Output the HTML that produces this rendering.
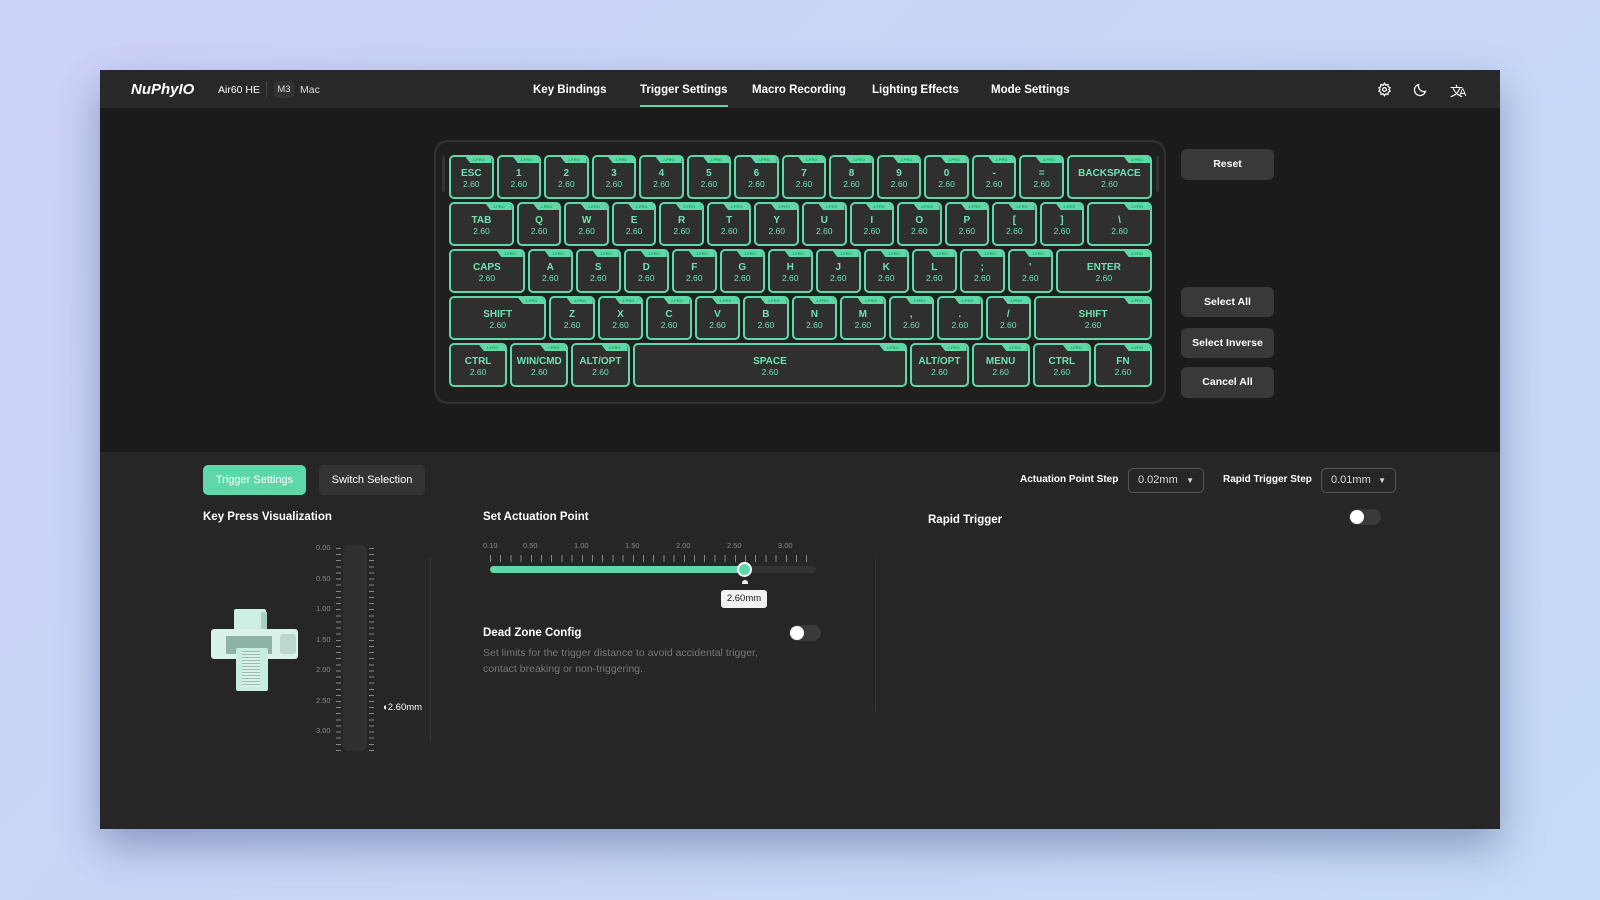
<!DOCTYPE html>
<html><head><meta charset="utf-8"><style>
*{box-sizing:border-box;margin:0;padding:0}
body{width:1600px;height:900px;overflow:hidden;background:linear-gradient(135deg,#cdd2f9 0%,#c9d8f8 60%,#c6dcf7 100%);font-family:"Liberation Sans",sans-serif;position:relative}
.a{position:absolute}
#win{left:100px;top:70px;width:1400px;height:759px;background:#1b1b1b;box-shadow:0 18px 40px rgba(60,80,130,.45)}
#hdr{left:0;top:0;width:1400px;height:38px;background:#282828}
.nav{top:14px;color:#fff;font-size:11.5px;font-weight:bold;white-space:nowrap}
#bot{left:0;top:382px;width:1400px;height:377px;background:#262626}
.kb{left:334px;top:70px;width:732px;height:264px;border:2px solid #333;border-radius:14px;background:#1f1f1f}
.rows{left:349px;top:85px;width:703px}
.row{display:flex;gap:3px;height:44px;margin-bottom:3px}
.k{position:relative;background:#2f2f2f;border:2px solid #5fd8a9;border-radius:5px;color:#6fe2b4;font-size:10px;text-align:center;padding-top:11px;line-height:11px;font-weight:bold;overflow:hidden}
.k span{font-size:8.5px;font-weight:normal;display:block}
.k i{position:absolute;right:0;top:0;width:26px;height:6px;background:#5fd8a9;color:#1a5;font-size:4px;line-height:6px;font-style:normal;clip-path:polygon(0 0,100% 0,100% 100%,18% 100%)}
.btn{background:#393939;border-radius:6px;color:#fff;font-size:10.5px;font-weight:bold;text-align:center}
.lbl{color:#fff;font-size:11.5px;font-weight:bold}
.dd{border:1px solid #555;border-radius:5px;color:#ddd;font-size:11px;padding:5px 9px}
.tog{width:32px;height:16px;border-radius:8px;background:#3a3a3a}
.tog b{position:absolute;left:1px;top:1px;width:14px;height:14px;border-radius:7px;background:#fff}
.sl{color:#888;font-size:7.5px}
</style></head><body>
<div id="win" class="a">
 <div id="hdr" class="a">
  <div class="a" style="left:31px;top:11px;color:#fff;font-size:15px;font-weight:bold;font-style:italic">NuPhyIO</div>
  <div class="a" style="left:118px;top:14px;color:#fff;font-size:10.5px">Air60 HE</div>
  <div class="a" style="left:166px;top:11px;width:1px;height:16px;background:#444"></div>
  <div class="a" style="left:174px;top:11px;width:20px;height:17px;background:#333;border-radius:4px;color:#ddd;font-size:9.5px;text-align:center;line-height:17px">M3</div>
  <div class="a" style="left:200px;top:14px;color:#ddd;font-size:10.5px">Mac</div>
  <div class="a nav" style="left:433px">Key Bindings</div>
  <div class="a nav" style="left:540px">Trigger Settings</div>
  <div class="a" style="left:540px;top:35px;width:88px;height:2px;background:#5fd8a9"></div>
  <div class="a nav" style="left:652px">Macro Recording</div>
  <div class="a nav" style="left:772px">Lighting Effects</div>
  <div class="a nav" style="left:891px">Mode Settings</div>
  <svg class="a" style="left:1277px;top:12px" width="15" height="15" viewBox="0 0 24 24" fill="none" stroke="#fff" stroke-width="2"><circle cx="12" cy="12" r="3"/><path d="M12 2l2 3 3.5-1 .5 3.5 3 2-2 2.5 2 2.5-3 2-.5 3.5-3.5-1-2 3-2-3-3.5 1-.5-3.5-3-2 2-2.5-2-2.5 3-2 .5-3.5 3.5 1z"/></svg>
  <svg class="a" style="left:1313px;top:12px" width="15" height="15" viewBox="0 0 24 24" fill="none" stroke="#fff" stroke-width="2"><path d="M20 15A9 9 0 0 1 9 4a9 9 0 1 0 11 11z"/></svg>
  <div class="a" style="left:1350px;top:11px;color:#fff;font-size:13px">文<span style="font-size:11px;margin-left:-4px">A</span></div>
 </div>
 <div class="a kb"></div>
 <div class="a" style="left:342px;top:86px;width:3px;height:36px;background:#333;border-radius:2px"></div>
 <div class="a" style="left:1056px;top:86px;width:3px;height:36px;background:#333;border-radius:2px"></div>
 <div class="a rows">
  <div class="row">
   <div class="k" style="flex:1 1 0">ESC<span>2.60</span><i>J-PRO</i></div><div class="k" style="flex:1 1 0">1<span>2.60</span><i>J-PRO</i></div><div class="k" style="flex:1 1 0">2<span>2.60</span><i>J-PRO</i></div><div class="k" style="flex:1 1 0">3<span>2.60</span><i>J-PRO</i></div><div class="k" style="flex:1 1 0">4<span>2.60</span><i>J-PRO</i></div><div class="k" style="flex:1 1 0">5<span>2.60</span><i>J-PRO</i></div><div class="k" style="flex:1 1 0">6<span>2.60</span><i>J-PRO</i></div><div class="k" style="flex:1 1 0">7<span>2.60</span><i>J-PRO</i></div><div class="k" style="flex:1 1 0">8<span>2.60</span><i>J-PRO</i></div><div class="k" style="flex:1 1 0">9<span>2.60</span><i>J-PRO</i></div><div class="k" style="flex:1 1 0">0<span>2.60</span><i>J-PRO</i></div><div class="k" style="flex:1 1 0">-<span>2.60</span><i>J-PRO</i></div><div class="k" style="flex:1 1 0">=<span>2.60</span><i>J-PRO</i></div><div class="k" style="flex:2 2 0">BACKSPACE<span>2.60</span><i>J-PRO</i></div>
  </div>
  <div class="row">
   <div class="k" style="flex:1.5 1.5 0">TAB<span>2.60</span><i>J-PRO</i></div><div class="k" style="flex:1 1 0">Q<span>2.60</span><i>J-PRO</i></div><div class="k" style="flex:1 1 0">W<span>2.60</span><i>J-PRO</i></div><div class="k" style="flex:1 1 0">E<span>2.60</span><i>J-PRO</i></div><div class="k" style="flex:1 1 0">R<span>2.60</span><i>J-PRO</i></div><div class="k" style="flex:1 1 0">T<span>2.60</span><i>J-PRO</i></div><div class="k" style="flex:1 1 0">Y<span>2.60</span><i>J-PRO</i></div><div class="k" style="flex:1 1 0">U<span>2.60</span><i>J-PRO</i></div><div class="k" style="flex:1 1 0">I<span>2.60</span><i>J-PRO</i></div><div class="k" style="flex:1 1 0">O<span>2.60</span><i>J-PRO</i></div><div class="k" style="flex:1 1 0">P<span>2.60</span><i>J-PRO</i></div><div class="k" style="flex:1 1 0">[<span>2.60</span><i>J-PRO</i></div><div class="k" style="flex:1 1 0">]<span>2.60</span><i>J-PRO</i></div><div class="k" style="flex:1.5 1.5 0">\<span>2.60</span><i>J-PRO</i></div>
  </div>
  <div class="row">
   <div class="k" style="flex:1.75 1.75 0">CAPS<span>2.60</span><i>J-PRO</i></div><div class="k" style="flex:1 1 0">A<span>2.60</span><i>J-PRO</i></div><div class="k" style="flex:1 1 0">S<span>2.60</span><i>J-PRO</i></div><div class="k" style="flex:1 1 0">D<span>2.60</span><i>J-PRO</i></div><div class="k" style="flex:1 1 0">F<span>2.60</span><i>J-PRO</i></div><div class="k" style="flex:1 1 0">G<span>2.60</span><i>J-PRO</i></div><div class="k" style="flex:1 1 0">H<span>2.60</span><i>J-PRO</i></div><div class="k" style="flex:1 1 0">J<span>2.60</span><i>J-PRO</i></div><div class="k" style="flex:1 1 0">K<span>2.60</span><i>J-PRO</i></div><div class="k" style="flex:1 1 0">L<span>2.60</span><i>J-PRO</i></div><div class="k" style="flex:1 1 0">;<span>2.60</span><i>J-PRO</i></div><div class="k" style="flex:1 1 0">'<span>2.60</span><i>J-PRO</i></div><div class="k" style="flex:2.25 2.25 0">ENTER<span>2.60</span><i>J-PRO</i></div>
  </div>
  <div class="row">
   <div class="k" style="flex:2.25 2.25 0">SHIFT<span>2.60</span><i>J-PRO</i></div><div class="k" style="flex:1 1 0">Z<span>2.60</span><i>J-PRO</i></div><div class="k" style="flex:1 1 0">X<span>2.60</span><i>J-PRO</i></div><div class="k" style="flex:1 1 0">C<span>2.60</span><i>J-PRO</i></div><div class="k" style="flex:1 1 0">V<span>2.60</span><i>J-PRO</i></div><div class="k" style="flex:1 1 0">B<span>2.60</span><i>J-PRO</i></div><div class="k" style="flex:1 1 0">N<span>2.60</span><i>J-PRO</i></div><div class="k" style="flex:1 1 0">M<span>2.60</span><i>J-PRO</i></div><div class="k" style="flex:1 1 0">,<span>2.60</span><i>J-PRO</i></div><div class="k" style="flex:1 1 0">.<span>2.60</span><i>J-PRO</i></div><div class="k" style="flex:1 1 0">/<span>2.60</span><i>J-PRO</i></div><div class="k" style="flex:2.75 2.75 0">SHIFT<span>2.60</span><i>J-PRO</i></div>
  </div>
  <div class="row">
   <div class="k" style="flex:1.25 1.25 0">CTRL<span>2.60</span><i>J-PRO</i></div><div class="k" style="flex:1.25 1.25 0">WIN/CMD<span>2.60</span><i>J-PRO</i></div><div class="k" style="flex:1.25 1.25 0">ALT/OPT<span>2.60</span><i>J-PRO</i></div><div class="k" style="flex:6.25 6.25 0">SPACE<span>2.60</span><i>J-PRO</i></div><div class="k" style="flex:1.25 1.25 0">ALT/OPT<span>2.60</span><i>J-PRO</i></div><div class="k" style="flex:1.25 1.25 0">MENU<span>2.60</span><i>J-PRO</i></div><div class="k" style="flex:1.25 1.25 0">CTRL<span>2.60</span><i>J-PRO</i></div><div class="k" style="flex:1.25 1.25 0">FN<span>2.60</span><i>J-PRO</i></div>
  </div>
 </div>
 <div class="a btn" style="left:1081px;top:79px;width:93px;height:31px;line-height:31px">Reset</div>
 <div class="a btn" style="left:1081px;top:217px;width:93px;height:30px;line-height:30px">Select All</div>
 <div class="a btn" style="left:1081px;top:258px;width:93px;height:30px;line-height:30px">Select Inverse</div>
 <div class="a btn" style="left:1081px;top:297px;width:93px;height:31px;line-height:31px">Cancel All</div>

 <div id="bot" class="a">
  <div class="a" style="left:103px;top:13px;width:103px;height:30px;background:#5fd8a9;border-radius:5px;color:#fff;font-size:11px;text-align:center;line-height:30px">Trigger Settings</div>
  <div class="a" style="left:219px;top:13px;width:106px;height:30px;background:#343434;border-radius:5px;color:#fff;font-size:11px;text-align:center;line-height:30px">Switch Selection</div>
  <div class="a" style="left:920px;top:22px;color:#fff;font-size:10px;font-weight:bold">Actuation Point Step</div>
  <div class="a dd" style="left:1028px;top:16px;width:76px;height:25px">0.02mm <span style="position:absolute;right:9px;font-size:8px;top:7px">▼</span></div>
  <div class="a" style="left:1123px;top:22px;color:#fff;font-size:10px;font-weight:bold">Rapid Trigger Step</div>
  <div class="a dd" style="left:1221px;top:16px;width:75px;height:25px">0.01mm <span style="position:absolute;right:9px;font-size:8px;top:7px">▼</span></div>

  <div class="a lbl" style="left:103px;top:59px">Key Press Visualization</div>
  <div class="a lbl" style="left:383px;top:59px">Set Actuation Point</div>
  <div class="a lbl" style="left:828px;top:62px">Rapid Trigger</div>
  <div class="a tog" style="left:1249px;top:57px"><b></b></div>

  <div class="a" style="left:243px;top:93px;width:24px;height:206px;background:#303030;border-radius:6px"></div>
  <div class="a" style="left:236px;top:96px;width:5px;height:206px;background:repeating-linear-gradient(to bottom,#888 0 1px,transparent 1px 6.12px)"></div>
  <div class="a" style="left:269px;top:96px;width:5px;height:206px;background:repeating-linear-gradient(to bottom,#888 0 1px,transparent 1px 6.12px)"></div>
  <div class="a sl" style="left:216px;top:91px">0.00</div>
  <div class="a sl" style="left:216px;top:122px">0.50</div>
  <div class="a sl" style="left:216px;top:152px">1.00</div>
  <div class="a sl" style="left:216px;top:183px">1.50</div>
  <div class="a sl" style="left:216px;top:213px">2.00</div>
  <div class="a sl" style="left:216px;top:244px">2.50</div>
  <div class="a sl" style="left:216px;top:274px">3.00</div>
  <div class="a" style="left:282px;top:250px;color:#fff;font-size:9.5px">◖2.60mm</div>
  <div class="a" style="left:330px;top:106px;width:1px;height:184px;background:#333"></div>
  <div class="a" style="left:775px;top:106px;width:1px;height:153px;background:#333"></div>

  <div class="a" style="left:134px;top:157px;width:32px;height:32px;background:#cdeee0;border-radius:2px"></div>
  <div class="a" style="left:161px;top:160px;width:6px;height:28px;background:#a9cfc1"></div>
  <div class="a" style="left:111px;top:177px;width:87px;height:30px;background:#d8f2e8;border-radius:3px"></div>
  <div class="a" style="left:180px;top:182px;width:16px;height:20px;background:#bcd8cd;border-radius:3px"></div>
  <div class="a" style="left:126px;top:184px;width:46px;height:18px;background:#8fb3a6"></div>
  <div class="a" style="left:136px;top:196px;width:32px;height:43px;background:#c9ece0;border-radius:2px"></div>
  <div class="a" style="left:142px;top:199px;width:18px;height:36px;background:repeating-linear-gradient(to bottom,#9bbcaf 0 1px,#d8f2e8 1px 3px)"></div>

  <div class="a" style="left:383px;top:89px;width:340px;height:10px;color:#888;font-size:7.5px">
   <span class="a" style="left:0">0.10</span><span class="a" style="left:40px">0.50</span><span class="a" style="left:91px">1.00</span><span class="a" style="left:142px">1.50</span><span class="a" style="left:193px">2.00</span><span class="a" style="left:244px">2.50</span><span class="a" style="left:295px">3.00</span>
  </div>
  <div class="a" style="left:390px;top:103px;width:326px;height:7px;background:repeating-linear-gradient(to right,#888 0 1px,transparent 1px 10.2px)"></div>
  <div class="a" style="left:390px;top:114px;width:326px;height:7px;background:#333;border-radius:4px"></div>
  <div class="a" style="left:390px;top:114px;width:254px;height:7px;background:#5fd8a9;border-radius:4px"></div>
  <div class="a" style="left:637px;top:110px;width:15px;height:15px;border-radius:8px;background:#5fd8a9;border:2px solid #fff"></div>
  <div class="a" style="left:642px;top:128px;width:6px;height:4px;border-radius:3px 3px 0 0;background:#eee"></div>
  <div class="a" style="left:621px;top:138px;width:46px;height:18px;background:#f2f2f2;border-radius:3px;color:#222;font-size:9.5px;text-align:center;line-height:18px">2.60mm</div>
  <div class="a lbl" style="left:383px;top:175px">Dead Zone Config</div>
  <div class="a tog" style="left:689px;top:173px"><b></b></div>
  <div class="a" style="left:383px;top:193px;color:#777;font-size:10.5px;line-height:16px">Set limits for the trigger distance to avoid accidental trigger,<br>contact breaking or non-triggering.</div>
 </div>
</div>
</body></html>
